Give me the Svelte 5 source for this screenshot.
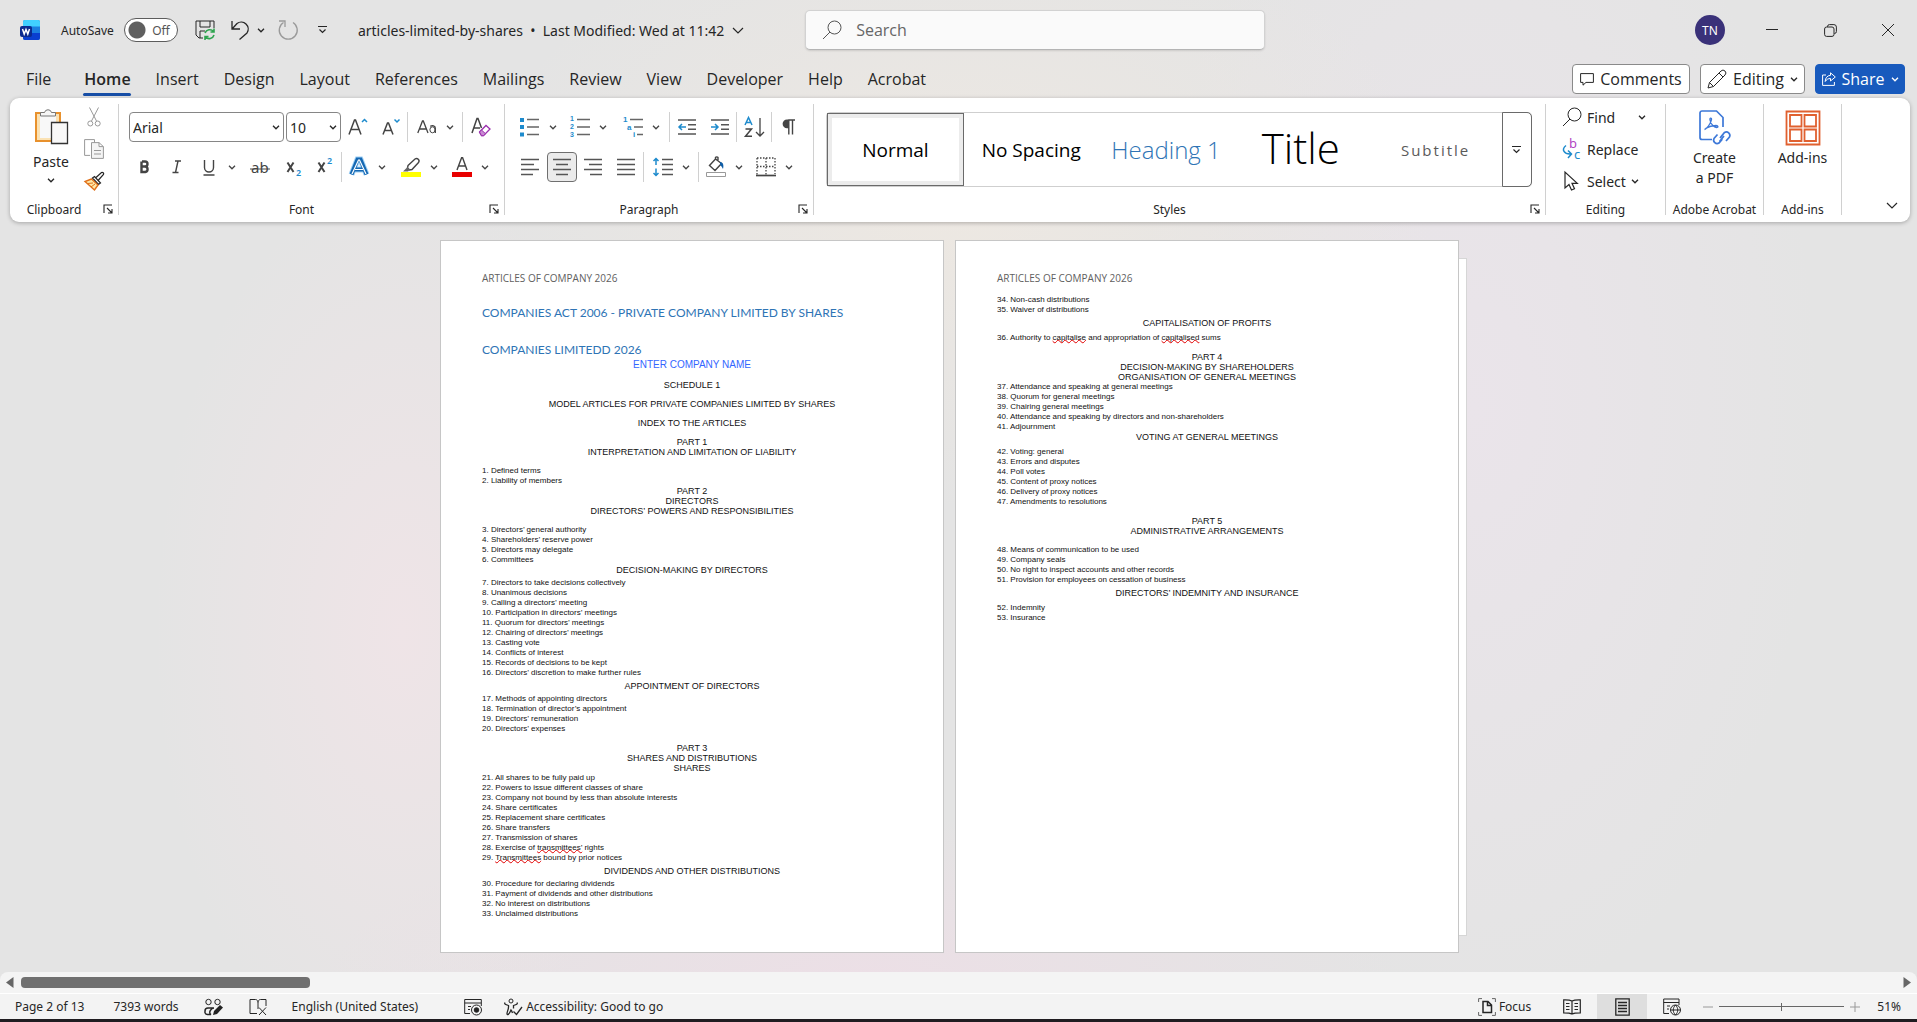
<script lang="ts">
    type Tool = { icon?: string; w?: number; label?: string; menu?: boolean; on?: boolean; sep?: boolean };
    type Line = { t: string; kind?: "item" | "centre" | "name"; gap?: "s" | "m" | "l" };

    // every icon is drawn on its own small canvas: [width, height, markup]
    const icons: Record<string, [number, number, string]> = {
        word: [20, 20, `<rect x="3" y="0" width="17" height="20" rx="2" fill="#1b7fe0" stroke="none"/><path d="M5 0h13a2 2 0 0 1 2 2v4.500H3V2a2 2 0 0 1 2-2z" fill="#41d0ff" stroke="none"/><path d="M3 13h17v5a2 2 0 0 1-2 2H5a2 2 0 0 1-2-2z" fill="#0a3fd0" stroke="none"/><rect x="0" y="6" width="12" height="11" rx="2" fill="#0b2a8e" stroke="none"/><path d="M2.500 9 4.200 14 6 9.500 7.800 14 9.500 9" stroke="#fff" stroke-width="1.500"/>`],
        save: [20, 20, `<path d="M1 1h18v7M1 1v14l3 3h4M5 1v6h10V1M5 18v-7h5"/><path d="M10 13a5 5 0 0 1 8.500-1.500M19 8.500V12h-3.500M19 15a5 5 0 0 1-8.500 2M10 20v-3.500h3.500" stroke="#2ea44f" stroke-width="1.600"/>`],
        undo: [18, 20, `<path d="M1 1v8h8M1.500 8.500 6 3.500a7 7 0 0 1 10 9.500L8.500 19.500" stroke-width="1.300"/>`],
        redo: [20, 20, `<path d="M5.500 2.500a9 9 0 1 0 9.500 0M1 1h6v6" stroke="#9a9a9a" stroke-width="1.300"/>`],
        qat: [9, 8, `<path d="M0 .5h9M1.500 3.500l3 3 3-3" stroke-width="1.200"/>`],
        chev: [8, 5, `<path d="M1 .8l3 3 3-3" stroke-width="1.300"/>`],
        chevBig: [12, 7, `<path d="M1 1l5 5 5-5" stroke-width="1.200"/>`],
        search: [20, 20, `<circle cx="12.500" cy="7.500" r="6.500"/><path d="M8 12 1 19"/>`],
        min: [12, 12, `<path d="M0 5.500h12"/>`],
        restore: [13, 13, `<rect x=".6" y="3" width="9.400" height="9.400" rx="2"/><path d="M3.500 3V2.600A2 2 0 0 1 5.500.6h4.400a2.500 2.500 0 0 1 2.500 2.500v4.400a2 2 0 0 1-2 2"/>`],
        close: [12, 12, `<path d="M0 0l12 12M12 0 0 12"/>`],
        comment: [14, 13, `<path d="M.6.6h12.800v8.800H6L3 12.200V9.400H.6z"/>`],
        pencil: [20, 20, `<path d="M1 19l1.500-5.500L14 2a2.800 2.800 0 0 1 4 4L6.500 17.500zM12 4l4 4M2.500 13.500l4 4"/>`],
        share: [14, 14, `<path d="M4 3H.6v10.400h11.800V10"/><path d="M8.500.8 13.300 5 8.500 9V6.500C6 6.500 4.500 7.500 3.200 9.500 3.400 6 5 3.600 8.500 3.300z"/>`],
        paste: [36, 40, `<path d="M3 7h24v28H3z" fill="#fbe2b4" stroke="#e8912d" stroke-width="2"/><path d="M7 10h16v22H7z" fill="#f8f8f8" stroke="none"/><path d="M7.500 10V6.500h4a3.600 3.600 0 0 1 7 0h4V10z" fill="#f6f6f6" stroke="#777"/><path d="M18.500 16.500h16v21h-16z" fill="#f8f8f8" stroke="#333" stroke-width="1.300"/>`],
        cut: [14, 20, `<path d="M2.500.5l7 13.500M11.500.5l-7 13.500" stroke="#999"/><circle cx="3.300" cy="16.500" r="2.500" stroke="#999"/><circle cx="10.700" cy="16.500" r="2.500" stroke="#999"/>`],
        copy: [20, 20, `<path d="M10.500 4V.6H.6v15.800h5.500" stroke="#999"/><path d="M7.500 3.600h7.500l4.400 4v11.800H7.500zM15 3.600v4h4.400M10 11.500h7M10 15h7" fill="#f4f4f4" stroke="#999"/>`],
        painter: [20, 20, `<path d="M12 6.500l5.500-5a1.500 1.500 0 0 1 2 2L14.500 9M8.500 7l2-1.500 6 6.500-2 1.500z" stroke-width="1.200"/><path d="M7.500 8 1 10.500l9.500 8.500 3.500-5z" fill="#ffe9a8" stroke="#e0701a" stroke-width="1.400"/><path d="M3.500 12.500 9 12M7 16l4-3" stroke="#e0701a"/>`],
        grow: [20, 20, `<path d="M1 17.500 6.500 3h1L13 17.500M3 12.500h8" stroke-width="1.500"/><path d="M14 5l2.500-2.500L19 5" stroke="#1e8bcd" stroke-width="1.500"/>`],
        shrink: [20, 20, `<path d="M2 17.500 6.500 6h1L12 17.500M4 13.500h6" stroke-width="1.500"/><path d="M13.500 2.500 16 5l2.500-2.500" stroke="#1e8bcd" stroke-width="1.500"/>`],
        cases: [20, 20, `<path d="M.8 16 5.500 4h.8L11 16M2.500 12h7" stroke-width="1.300"/><ellipse cx="15.500" cy="12.800" rx="2.600" ry="3"/><path d="M13.300 9.400c2-1.400 5-.8 5 1.600V16" stroke-width="1.300"/>`],
        clear: [20, 20, `<path d="M1 16 6 1.500h1L10.500 11M3 11h6" stroke-width="1.500"/><path d="M8.500 15 15 8.500l4 3.500-6.500 6.700H10.500z" fill="#fff" stroke="#9b2fae" stroke-width="1.300"/><path d="M8.500 15l2-2 4 3.700-2 2H10.500z" fill="#c98ad3" stroke="#9b2fae"/>`],
        bold: [20, 20, `<path d="M6.500 4.500v10.500h3.800a2.800 2.800 0 0 0 0-5.500H7M7 4.500h3a2.400 2.400 0 0 1 0 5" stroke-width="2.400"/>`],
        italic: [20, 20, `<path d="M8 4h6M5.500 15.500h6M11 4 8.500 15.500" stroke-width="1.400"/>`],
        under: [20, 20, `<path d="M5.500 3v7.500a4 4 0 0 0 9 0V3M4.500 18h11" stroke-width="1.400"/>`],
        strike: [20, 20, `<text x="1" y="16" font-size="15" fill="#444" stroke="none">ab</text><path d="M0 12h20"/>`],
        sub: [20, 20, `<path d="M3.500 5.500l6 9.500M9.500 5.500l-6 9.500" stroke-width="2"/><text x="12" y="19" font-size="9" font-weight="600" fill="#1e8bcd" stroke="none">2</text>`],
        sup: [20, 20, `<path d="M3.500 5.500l6 9.500M9.500 5.500l-6 9.500" stroke-width="2"/><text x="12" y="7" font-size="9" font-weight="600" fill="#1e8bcd" stroke="none">2</text>`],
        effects: [20, 20, `<path d="M2.500 17.500 8.500 2.500h3l6 15M5.500 12.500h9" stroke="#9fd0f5" stroke-width="6"/><path d="M2.500 17.500 8.500 2.500h3l6 15M5.500 12.500h9" stroke="#1568b3" stroke-width="4"/><path d="M3 17 9.500 3h1L17 17M6 12.500h8" stroke="#fff" stroke-width="1.200"/>`],
        marker: [20, 20, `<path d="M7 8.500 14 2a2.500 2.500 0 0 1 3.500 3.500l-6.500 7-2.500.5-2-2z" stroke-width="1.400"/><path d="M2 14.500l4.500-4.500 2.500 2.500-2 2z" fill="#666" stroke="none"/><rect y="15" width="20" height="5" fill="#ffff00" stroke="none"/>`],
        colour: [20, 20, `<path d="M5 13 9.600.800h1L15 13M6.500 9h7" stroke-width="1.400"/><rect y="15" width="20" height="5" fill="#e80000" stroke="none"/>`],
        bullets: [20, 20, `<path d="M7 2.500h12M7 10h12M7 17.500h12" stroke="#666" stroke-width="1.500"/><path d="M0 1h4v4H0zM0 8h4v4H0zM0 15.500h4v4H0z" fill="#1e8bcd" stroke="none"/>`],
        numbers: [20, 20, `<path d="M7 2.500h13M7 10h13M7 17.500h13" stroke="#666" stroke-width="1.500"/><g font-family="Liberation Sans" font-size="7" font-weight="700" fill="#1e8bcd" stroke="none"><text x="0" y="4">1</text><text x="0" y="12">2</text><text x="0" y="20">3</text></g>`],
        multi: [20, 20, `<path d="M7 2.500h13M11 10h9M14 17.500h6" stroke="#666" stroke-width="1.500"/><g font-family="Liberation Sans" font-size="8" font-weight="700" fill="#1e8bcd" stroke="none"><text x="0" y="5">1</text><text x="4" y="13">a</text><text x="10" y="20">i</text></g>`],
        outdent: [18, 18, `<path d="M0 2h18M10 6.700h8M10 11.300h8M0 16h18" stroke="#555" stroke-width="1.400"/><path d="M8 9H1M4 6 1 9l3 3" stroke="#1e8bcd" stroke-width="1.500"/>`],
        indent: [18, 18, `<path d="M0 2h18M10 6.700h8M10 11.300h8M0 16h18" stroke="#555" stroke-width="1.400"/><path d="M0 9h7M4 6l3 3-3 3" stroke="#1e8bcd" stroke-width="1.500"/>`],
        sort: [20, 20, `<path d="M1 8 4.500.500 8 8M2.200 5.500h4.600" stroke="#1e8bcd" stroke-width="1.500"/><path d="M1.500 12h6l-6 7.200h6.500" stroke-width="1.500"/><path d="M16 1v18M12 15l4 4 4-4" stroke-width="1.300"/>`],
        pilcrow: [14, 16, `<path d="M6.500 1H13M6.800 1v14.500M10.500 1v14.500" stroke-width="1.400"/><path d="M7 .4H5a4.400 4.400 0 0 0 0 8.800h2z" fill="#444" stroke="none"/>`],
        left: [18, 18, `<path d="M0 1.500h18M0 6.500h13M0 11.500h18M0 16.500h12" stroke="#555" stroke-width="1.500"/>`],
        centre: [18, 18, `<path d="M0 1.500h18M3 6.500h12M0 11.500h18M3 16.500h12" stroke="#555" stroke-width="1.500"/>`],
        right: [18, 18, `<path d="M0 1.500h18M5 6.500h13M0 11.500h18M6 16.500h12" stroke="#555" stroke-width="1.500"/>`],
        justify: [18, 18, `<path d="M0 1.500h18M0 6.500h18M0 11.500h18M0 16.500h18" stroke="#555" stroke-width="1.500"/>`],
        spacing: [20, 20, `<path d="M9 2.500h11M9 7.500h11M9 12.500h11M9 17.500h11" stroke="#555" stroke-width="1.500"/><path d="M3 1.500V8M.5 4 3 1.500 5.500 4M3 11.500v7M.5 16 3 18.500 5.500 16" stroke="#1e8bcd" stroke-width="1.500"/>`],
        bucket: [20, 20, `<path d="M9.500 2 3.500 8.500l5.500 5 6.500-7zM9.500 2v-1.500a1.500 1.500 0 0 1 2.500 0V4" stroke-width="1.400"/><path d="M14 5c3 0 4 3 3 7-1-2-1.500-3-3-4z" fill="#0f5ea8" stroke="none"/><path d="M.5 15.500h19v4H.5z" stroke="#999"/>`],
        borders: [20, 20, `<path d="M1 1h18v16M1 1v17M10 1v17M1 9.500h18" stroke-dasharray="1.500 1.500" stroke-width="1.300"/><path d="M0 18.500h20" stroke-width="1.700"/>`],
        launch: [10, 10, `<path d="M1 9V1h8M4 4l5 5M9 5v4H5" stroke-width="1.100"/>`],
        replace: [20, 20, `<text x="7" y="9" font-size="13" fill="#b146c2" stroke="none">b</text><text x="12" y="20" font-size="13" fill="#1e8bcd" stroke="none">c</text><path d="M4 6.500c-5 4-2 9 5 8.500M6 11.500l3.500 3.500L6 19" stroke="#1e8bcd" stroke-width="1.500"/>`],
        pointer: [20, 20, `<path d="M3 1v16l4-3.500 2.500 5.500 3-1.300-2.500-5.400h5.300z" stroke-width="1.200"/>`],
        pdf: [32, 36, `<path d="M13 29.500H3a2 2 0 0 1-2-2V3a2 2 0 0 1 2-2h14.500L24 7.500V17" stroke="#3d78d8" stroke-width="1.700"/><path d="M5.500 19.500c2-.5 6-5 7-10 .3-2-2-2-1.500.5.700 4 4 7.500 6.500 7.500 2 0 2-1.800-.5-2-3 0-7 1-10.500 3" stroke="#3d78d8" stroke-width="1.300"/><path d="M21 26l4.500-5.500a3.500 3.500 0 0 1 5 4.500L27 29M25 24l-4.500 5.500M23.500 27 20 31a3.500 3.500 0 0 1-5-4.500l3.500-4" stroke="#3d78d8" stroke-width="1.700" transform="translate(0 2)"/>`],
        addins: [36, 36, `<path d="M1.500 1.500h33v33h-33zM5 5h11.500v11.500H5zM19.500 5H31v11.500H19.500zM5 19.500h11.500V31H5zM19.500 19.500H31V31H19.500z" stroke="#e0602f" stroke-width="1.800"/>`],
        tracking: [20, 18, `<circle cx="4.500" cy="4" r="2.700"/><circle cx="13.500" cy="4" r="2.700"/><path d="M1 15v-2a3 3 0 0 1 3-3h6c-3 0-6 5-3 6.500H4A3 3 0 0 1 1 15" stroke-width="1.500"/><path d="M9 17l1-4 6-6 3 2.500-6 6.500z" fill="#222" stroke="none"/>`],
        proof: [18, 18, `<path d="M8 15.500H1v-14h5.500C8 1.500 9 3 9 4.500V11M9 4.500c0-1.500 1-3 2.500-3H17V8M10 9.500l7 7.500M17 9.500 10 17"/>`],
        macro: [18, 18, `<path d="M6 15.500H.7V1.500h16.600V8M.7 5h16.600M4 8.500h3M4 11.500h2"/><circle cx="12.500" cy="12" r="5" fill="#f3f3f3"/><circle cx="12.500" cy="12" r="2.300" fill="#222"/>`],
        access: [18, 18, `<circle cx="7" cy="3" r="2"/><path d="M1 4.500c-1 1.500.5 2 3.500 3C5 11 3 13.500 3 15.500S5 17 7 12c1 1 1 2 1.500 3M13 4.500c1 1.500-.5 2-3.500 3v3M9.500 13.500l3 3L18 9" stroke-width="1.300"/>`],
        focus: [18, 18, `<path d="M.6 4V.6H4M14 .6h3.400V4M17.400 14v3.400H14M4 17.400H.6V14" stroke="#666"/><path d="M5 3.500h5l3.500 3.500v7.500H5zM9.500 3.500V7.500h4" stroke-width="1.500"/>`],
        read: [18, 16, `<path d="M9 2C7 .800 4 .7.7.8v13c3.300 0 6.300 0 8.300 1.200 2-1.200 5-1.200 8.300-1.200V.8C14 .7 11 .8 9 2zv13M3 4.500h3.500M3 7.500h3.500M3 10.500h3.500M11.500 4.500H15M11.500 7.500H15M11.500 10.500H15" stroke-width="1.200"/>`],
        print: [15, 18, `<path d="M.8.8h13.400v16.400H.8zM3 4.500h9M3 7.500h9M3 10.500h9M3 13.500h9" stroke-width="1.300"/>`],
        web: [18, 18, `<path d="M6 15.500H.7V1H16v6M.7 4.500H16M4 8h3M4 11h2"/><circle cx="12.500" cy="12" r="5" fill="#f3f3f3"/><path d="M7.500 12h10M12.500 7c-3 3-3 7 0 10M12.500 7c3 3 3 7 0 10"/>`],
        minus: [10, 10, `<path d="M0 5h10" stroke="#999"/>`],
        plus: [10, 10, `<path d="M0 5h10M5 0v10" stroke="#999"/>`],
        arrowL: [8, 11, `<path d="M7.500 0v11L0 5.500z" fill="#666" stroke="none"/>`],
        arrowR: [8, 11, `<path d="M.5 0v11L8 5.500z" fill="#666" stroke="none"/>`],
    };

    const tabs = ["File", "Home", "Insert", "Design", "Layout", "References", "Mailings", "Review", "View", "Developer", "Help", "Acrobat"];
    let activeTab = "Home";

    const fontTop: Tool[] = [
        { icon: "grow", w: 34, label: "Increase font size" },
        { icon: "shrink", w: 32, label: "Decrease font size" },
        { sep: true },
        { icon: "cases", w: 54, label: "Change case", menu: true },
        { sep: true },
        { icon: "clear", w: 36, label: "Clear all formatting" },
    ];
    const fontBottom: Tool[] = [
        { icon: "bold", w: 32, label: "Bold" },
        { icon: "italic", w: 32, label: "Italic" },
        { icon: "under", w: 48, label: "Underline", menu: true },
        { icon: "strike", w: 38, label: "Strikethrough" },
        { icon: "sub", w: 30, label: "Subscript" },
        { icon: "sup", w: 32, label: "Superscript" },
        { sep: true },
        { icon: "effects", w: 50, label: "Text effects", menu: true },
        { icon: "marker", w: 54, label: "Highlight colour", menu: true },
        { icon: "colour", w: 48, label: "Font colour", menu: true },
    ];
    const paraTop: Tool[] = [
        { icon: "bullets", w: 50, label: "Bullets", menu: true },
        { icon: "numbers", w: 50, label: "Numbering", menu: true },
        { icon: "multi", w: 56, label: "Multilevel list", menu: true },
        { sep: true },
        { icon: "outdent", w: 34, label: "Decrease indent" },
        { icon: "indent", w: 32, label: "Increase indent" },
        { sep: true },
        { icon: "sort", w: 34, label: "Sort" },
        { sep: true },
        { icon: "pilcrow", w: 34, label: "Show marks" },
    ];
    const paraBottom: Tool[] = [
        { icon: "left", w: 34, label: "Align left" },
        { icon: "centre", w: 30, label: "Centre", on: true },
        { icon: "right", w: 32, label: "Align right" },
        { icon: "justify", w: 34, label: "Justify" },
        { sep: true },
        { icon: "spacing", w: 54, label: "Line spacing", menu: true },
        { sep: true },
        { icon: "bucket", w: 50, label: "Shading", menu: true },
        { icon: "borders", w: 50, label: "Borders", menu: true },
    ];

    const styles = [
        { name: "Normal", cls: "normal" },
        { name: "No Spacing", cls: "plain" },
        { name: "Heading 1", cls: "heading" },
        { name: "Title", cls: "title" },
        { name: "Subtitle", cls: "subtitle" },
    ];

    const head = (t: string, gap?: Line["gap"]): Line => ({ t, gap, kind: "centre" });
    const item = (t: string, gap?: Line["gap"]): Line => ({ t, gap, kind: "item" });

    // words between underscores are flagged by the spell checker
    const pageOne: Line[] = [
        { t: "ENTER COMPANY NAME", kind: "name" },
        head("SCHEDULE 1", "l"),
        head("MODEL ARTICLES FOR PRIVATE COMPANIES LIMITED BY SHARES", "l"),
        head("INDEX TO THE ARTICLES", "l"),
        head("PART 1", "l"),
        head("INTERPRETATION AND LIMITATION OF LIABILITY"),
        item("1. Defined terms", "l"),
        item("2. Liability of members"),
        head("PART 2"),
        head("DIRECTORS"),
        head("DIRECTORS’ POWERS AND RESPONSIBILITIES"),
        item("3. Directors’ general authority", "l"),
        item("4. Shareholders’ reserve power"),
        item("5. Directors may delegate"),
        item("6. Committees"),
        head("DECISION-MAKING BY DIRECTORS"),
        item("7. Directors to take decisions collectively", "s"),
        item("8. Unanimous decisions"),
        item("9. Calling a directors’ meeting"),
        item("10. Participation in directors’ meetings"),
        item("11. Quorum for directors’ meetings"),
        item("12. Chairing of directors’ meetings"),
        item("13. Casting vote"),
        item("14. Conflicts of interest"),
        item("15. Records of decisions to be kept"),
        item("16. Directors’ discretion to make further rules"),
        head("APPOINTMENT OF DIRECTORS", "s"),
        item("17. Methods of appointing directors", "s"),
        item("18. Termination of director’s appointment"),
        item("19. Directors’ remuneration"),
        item("20. Directors’ expenses"),
        head("PART 3", "l"),
        head("SHARES AND DISTRIBUTIONS"),
        head("SHARES"),
        item("21. All shares to be fully paid up"),
        item("22. Powers to issue different classes of share"),
        item("23. Company not bound by less than absolute interests"),
        item("24. Share certificates"),
        item("25. Replacement share certificates"),
        item("26. Share transfers"),
        item("27. Transmission of shares"),
        item("28. Exercise of _transmittees’_ rights"),
        item("29. _Transmittees_ bound by prior notices"),
        head("DIVIDENDS AND OTHER DISTRIBUTIONS", "s"),
        item("30. Procedure for declaring dividends", "s"),
        item("31. Payment of dividends and other distributions"),
        item("32. No interest on distributions"),
        item("33. Unclaimed distributions"),
    ];
    const pageTwo: Line[] = [
        item("34. Non-cash distributions"),
        item("35. Waiver of distributions"),
        head("CAPITALISATION OF PROFITS", "s"),
        item("36. Authority to _capitalise_ and appropriation of _capitalised_ sums", "m"),
        head("PART 4", "l"),
        head("DECISION-MAKING BY SHAREHOLDERS"),
        head("ORGANISATION OF GENERAL MEETINGS"),
        item("37. Attendance and speaking at general meetings"),
        item("38. Quorum for general meetings"),
        item("39. Chairing general meetings"),
        item("40. Attendance and speaking by directors and non-shareholders"),
        item("41. Adjournment"),
        head("VOTING AT GENERAL MEETINGS"),
        item("42. Voting: general", "m"),
        item("43. Errors and disputes"),
        item("44. Poll votes"),
        item("45. Content of proxy notices"),
        item("46. Delivery of proxy notices"),
        item("47. Amendments to resolutions"),
        head("PART 5", "l"),
        head("ADMINISTRATIVE ARRANGEMENTS"),
        item("48. Means of communication to be used", "l"),
        item("49. Company seals"),
        item("50. No right to inspect accounts and other records"),
        item("51. Provision for employees on cessation of business"),
        head("DIRECTORS’ INDEMNITY AND INSURANCE", "s"),
        item("52. Indemnity", "m"),
        item("53. Insurance"),
    ];
</script>

{#snippet ico(name: string)}
    <svg class="ico" width={icons[name][0]} height={icons[name][1]} viewBox="0 0 {icons[name][0]} {icons[name][1]}" aria-hidden="true">{@html icons[name][2]}</svg>
{/snippet}

{#snippet tools(list: Tool[])}
    {#each list as tool}
        {#if tool.sep}
            <span class="tool-sep"></span>
        {:else}
            <button class="tool" class:on={tool.on} style="width: {tool.w}px" aria-label={tool.label}>
                {@render ico(tool.icon ?? "")}
                {#if tool.menu}{@render ico("chev")}{/if}
            </button>
        {/if}
    {/each}
{/snippet}

{#snippet caption(text: string, launcher: boolean)}
    <div class="caption">
        <span>{text}</span>
        {#if launcher}<button class="launcher" aria-label="{text} settings">{@render ico("launch")}</button>{/if}
    </div>
{/snippet}

{#snippet lines(list: Line[])}
    {#each list as line}
        <p class="line {line.kind} {line.gap ? 'gap-' + line.gap : ''}">
            {#each line.t.split("_") as part, i}{#if i % 2}<span class="typo">{part}</span>{:else}{part}{/if}{/each}
        </p>
    {/each}
{/snippet}

<div class="app">
    <header class="titlebar">
        <div class="quick">
            <span class="logo">{@render ico("word")}</span>
            <label class="autosave">
                AutoSave
                <span class="switch"><input type="checkbox" /><span class="off">Off</span></span>
            </label>
            <button class="save" aria-label="Save">{@render ico("save")}</button>
            <button class="undo" aria-label="Undo">{@render ico("undo")}{@render ico("chev")}</button>
            <button class="redo" aria-label="Redo">{@render ico("redo")}</button>
            <button class="more" aria-label="Customise toolbar">{@render ico("qat")}</button>
            <button class="docname">articles-limited-by-shares&nbsp; • &nbsp;Last Modified: Wed at 11:42 {@render ico("chevBig")}</button>
        </div>
        <label class="search">
            {@render ico("search")}
            <input type="search" placeholder="Search" aria-label="Search" />
        </label>
        <div class="window">
            <button class="avatar">TN</button>
            <button aria-label="Minimise">{@render ico("min")}</button>
            <button aria-label="Restore">{@render ico("restore")}</button>
            <button aria-label="Close">{@render ico("close")}</button>
        </div>
    </header>

    <nav class="tabs">
        {#each tabs as tab}
            <button class="tab" class:active={tab === activeTab} on:click={() => (activeTab = tab)}>{tab}</button>
        {/each}
        <div class="actions">
            <button class="action comments">{@render ico("comment")} Comments</button>
            <button class="action editing">{@render ico("pencil")} Editing {@render ico("chev")}</button>
            <button class="action share">{@render ico("share")} Share {@render ico("chev")}</button>
        </div>
    </nav>

    <section class="ribbon">
        <div class="group clipboard">
            <div class="body">
                <button class="big paste">{@render ico("paste")}<span>Paste</span>{@render ico("chev")}</button>
                <div class="stack">
                    <button aria-label="Cut">{@render ico("cut")}</button>
                    <button aria-label="Copy">{@render ico("copy")}</button>
                    <button aria-label="Format painter">{@render ico("painter")}</button>
                </div>
            </div>
            {@render caption("Clipboard", true)}
        </div>

        <div class="group font">
            <div class="rows">
                <div class="row">
                    <div class="combo face">
                        <select aria-label="Font"><option>Arial</option></select>
                        {@render ico("chev")}
                    </div>
                    <div class="combo size">
                        <select aria-label="Font size"><option>10</option></select>
                        {@render ico("chev")}
                    </div>
                    {@render tools(fontTop)}
                </div>
                <div class="row">{@render tools(fontBottom)}</div>
            </div>
            {@render caption("Font", true)}
        </div>

        <div class="group paragraph">
            <div class="rows">
                <div class="row">{@render tools(paraTop)}</div>
                <div class="row">{@render tools(paraBottom)}</div>
            </div>
            {@render caption("Paragraph", true)}
        </div>

        <div class="group styles">
            <div class="gallery">
                {#each styles as style}
                    <button class="style {style.cls}">{style.name}</button>
                {/each}
                <button class="expand" aria-label="More styles">{@render ico("qat")}</button>
            </div>
            {@render caption("Styles", true)}
        </div>

        <div class="group edit">
            <div class="stack">
                <button>{@render ico("search")}<span class="find">Find</span>{@render ico("chev")}</button>
                <button>{@render ico("replace")}<span>Replace</span></button>
                <button>{@render ico("pointer")}<span>Select</span>{@render ico("chev")}</button>
            </div>
            {@render caption("Editing", false)}
        </div>

        <div class="group acrobat">
            <button class="big">{@render ico("pdf")}<span>Create<br />a PDF</span></button>
            {@render caption("Adobe Acrobat", false)}
        </div>

        <div class="group addins">
            <button class="big">{@render ico("addins")}<span>Add-ins</span></button>
            {@render caption("Add-ins", false)}
        </div>

        <button class="collapse" aria-label="Collapse ribbon">{@render ico("chevBig")}</button>
    </section>

    <main class="canvas">
        <article class="page">
            <p class="running">ARTICLES OF COMPANY 2026</p>
            <h1>COMPANIES ACT 2006 - PRIVATE COMPANY LIMITED BY SHARES</h1>
            <h1>COMPANIES LIMITEDD 2026</h1>
            {@render lines(pageOne)}
        </article>
        <article class="page second">
            <p class="running">ARTICLES OF COMPANY 2026</p>
            {@render lines(pageTwo)}
        </article>
        <div class="behind"></div>
    </main>

    <div class="scrollbar">
        <button aria-label="Scroll left">{@render ico("arrowL")}</button>
        <div class="track"><div class="thumb"></div></div>
        <button aria-label="Scroll right">{@render ico("arrowR")}</button>
    </div>

    <footer class="status">
        <button class="pages">Page 2 of 13</button>
        <button class="words">7393 words</button>
        <button class="track-btn" aria-label="Track changes">{@render ico("tracking")}</button>
        <button class="proof" aria-label="Proofing errors">{@render ico("proof")}</button>
        <button class="lang">English (United States)</button>
        <button class="macro" aria-label="Record macro">{@render ico("macro")}</button>
        <button class="access">{@render ico("access")} Accessibility: Good to go</button>
        <div class="views">
            <button class="focus">{@render ico("focus")} Focus</button>
            <button class="view" aria-label="Read mode">{@render ico("read")}</button>
            <button class="view current" aria-label="Print layout">{@render ico("print")}</button>
            <button class="view" aria-label="Web layout">{@render ico("web")}</button>
            <button class="zoom-step" aria-label="Zoom out">{@render ico("minus")}</button>
            <input type="range" min="0" max="100" value="50" aria-label="Zoom" />
            <button class="zoom-step" aria-label="Zoom in">{@render ico("plus")}</button>
            <button class="percent">51%</button>
        </div>
    </footer>
</div>

<style>
    :global(body) {
        background: #e4e4e4;
    }

    .app {
        display: flex;
        flex-direction: column;
        min-height: 100vh;
        box-sizing: border-box;
        border-bottom: 3px solid #1f1c20;
        font-family: "Noto Sans", "Open Sans", sans-serif;
        font-size: 12px;
        color: #262626;
        background:
            radial-gradient(ellipse 13% 45% at 21% 62%, #efe4e7 0%, transparent 100%),
            radial-gradient(ellipse 25% 30% at 50% 20%, #ede8e2 0%, transparent 100%),
            radial-gradient(ellipse 28% 16% at 45% 96%, #ecdfe6 0%, transparent 100%),
            radial-gradient(ellipse 18% 60% at 77% 40%, #eae4ea 0%, transparent 100%),
            #e4e4e4;
    }

    button {
        display: flex;
        align-items: center;
        justify-content: center;
        margin: 0;
        padding: 0;
        border: none;
        background: none;
        color: inherit;
        font: inherit;
        white-space: nowrap;
    }

    p,
    h1 {
        margin: 0;
    }

    .ico {
        display: block;
        flex: none;
        fill: none;
        stroke: currentColor;
        overflow: visible;
    }

    /* title bar */
    .titlebar {
        display: grid;
        grid-template-columns: 42% 24% 1fr;
        align-items: center;
        height: 60px;
    }

    .quick {
        display: flex;
        align-items: center;
        padding-left: 20px;
    }

    .autosave {
        display: flex;
        align-items: center;
        gap: 10px;
        margin-left: 21px;
    }

    .switch {
        display: grid;
        align-items: center;
    }

    .switch > * {
        grid-area: 1 / 1;
    }

    .switch input {
        appearance: none;
        width: 54px;
        height: 24px;
        margin: 0;
        border: 1px solid #5c5c5c;
        border-radius: 12px;
        background: radial-gradient(circle at 12px 11px, #5f5f5f 8px, #fff 9px);
    }

    .off {
        justify-self: end;
        padding-right: 8px;
        color: #555;
    }

    .save {
        margin-left: 17px;
    }

    .undo {
        gap: 8px;
        margin-left: 16px;
    }

    .redo {
        margin-left: 13px;
    }

    .more {
        margin-left: 20px;
    }

    .docname {
        gap: 8px;
        margin-left: 31px;
        font-size: 14px;
    }

    .search {
        display: flex;
        align-items: center;
        gap: 14px;
        height: 40px;
        box-sizing: border-box;
        padding: 0 16px;
        border: 1px solid #d2d2d2;
        border-bottom-color: #b4b4b4;
        border-radius: 5px;
        background: #fafafa;
        box-shadow: 0 1px 2px rgba(0, 0, 0, 0.12);
        color: #555;
    }

    .search input {
        flex: 1;
        min-width: 0;
        padding: 0;
        border: none;
        outline: none;
        background: none;
        font-family: "Open Sans", sans-serif;
        font-size: 16px;
        color: inherit;
    }

    .search input::placeholder {
        color: #666;
        opacity: 1;
    }

    .window {
        display: flex;
        align-items: center;
        justify-content: flex-end;
    }

    .window button {
        width: 58px;
        height: 30px;
    }

    .window .avatar {
        width: 30px;
        margin-right: 18px;
        border-radius: 50%;
        background: #3a3179;
        color: #fff;
    }

    /* ribbon tabs */
    .tabs {
        display: flex;
        align-items: center;
        height: 38px;
        padding: 0 12px 0 13px;
        font-family: "Open Sans", sans-serif;
    }

    .tab {
        position: relative;
        padding: 0 12px 0 13px;
        height: 34px;
        font-size: 16px;
    }

    .tab:first-child {
        margin-right: 8px;
    }

    .tab.active {
        font-weight: 600;
    }

    .tab.active::after {
        content: "";
        position: absolute;
        left: 12px;
        right: 12px;
        bottom: 0;
        height: 3px;
        border-radius: 2px;
        background: #174ea6;
    }

    .actions {
        display: flex;
        gap: 10px;
        margin-left: auto;
    }

    .action {
        gap: 6px;
        height: 30px;
        box-sizing: border-box;
        border: 1px solid #8a8a8a;
        border-radius: 4px;
        background: #fff;
        font-size: 16px;
    }

    .comments {
        width: 118px;
    }

    .editing {
        width: 105px;
    }

    .share {
        width: 90px;
        border-color: #185abd;
        background: #185abd;
        color: #fff;
    }

    /* ribbon */
    .ribbon {
        display: flex;
        height: 124px;
        margin: 0 7px 0 10px;
        border-radius: 9px;
        background: #fff;
        box-shadow: 0 1px 4px rgba(0, 0, 0, 0.28);
    }

    .group {
        display: flex;
        flex-direction: column;
        justify-content: space-between;
        box-sizing: border-box;
        margin: 6px 0 7px;
        border-right: 1px solid #d0d0d0;
    }

    .clipboard {
        width: 109px;
    }

    .font {
        width: 386px;
    }

    .paragraph {
        width: 309px;
    }

    .styles {
        flex: 1;
        min-width: 0;
    }

    .edit {
        width: 120px;
    }

    .acrobat {
        width: 98px;
    }

    .addins {
        width: 78px;
    }

    .caption {
        display: flex;
        align-items: center;
        height: 12px;
        text-align: center;
        white-space: nowrap;
    }

    .caption span {
        flex: 1;
    }

    .launcher {
        width: 20px;
    }

    .body {
        display: flex;
        gap: 14px;
        padding-left: 22px;
    }

    .big {
        flex-direction: column;
        justify-content: flex-start;
        gap: 2px;
        padding-top: 6px;
        font-size: 14px;
        line-height: 20px;
        white-space: normal;
    }

    .big.paste {
        gap: 6px;
        width: 38px;
        padding-top: 2px;
    }

    .stack {
        display: flex;
        flex-direction: column;
        margin-top: -3px;
    }

    .stack button {
        height: 32px;
        font-size: 14px;
    }

    .clipboard .stack button {
        width: 20px;
    }

    .edit .stack {
        padding-left: 16px;
    }

    .edit .stack button {
        justify-content: flex-start;
        gap: 5px;
    }

    .edit .find {
        flex: none;
        width: 46px;
        text-align: left;
    }

    .rows {
        display: flex;
        flex-direction: column;
        gap: 10px;
        padding: 8px 0 0 10px;
    }

    .paragraph .rows {
        padding-left: 8px;
    }

    .row {
        display: flex;
        align-items: center;
        height: 30px;
    }

    .tool {
        gap: 9px;
        height: 30px;
        box-sizing: border-box;
        color: #444;
    }

    .tool.on {
        border: 1px solid #6f6f6f;
        border-radius: 4px;
        background: #ebebeb;
    }

    .tool-sep {
        width: 1px;
        height: 30px;
        background: #d0d0d0;
    }

    .combo {
        display: grid;
        align-items: center;
        margin-right: 2px;
    }

    .combo > :global(*) {
        grid-area: 1 / 1;
    }

    .combo > :global(svg) {
        justify-self: end;
        margin-right: 4px;
        pointer-events: none;
    }

    .combo select {
        appearance: none;
        width: 100%;
        height: 30px;
        padding: 0 3px;
        border: 1px solid #868686;
        border-radius: 4px;
        background: #fff;
        color: #262626;
        font: inherit;
        font-size: 14px;
    }

    .face {
        width: 155px;
    }

    .size {
        width: 55px;
        margin-right: 0;
    }

    .gallery {
        display: flex;
        height: 75px;
        box-sizing: border-box;
        margin: 8px 13px 0 12px;
        border: 1px solid #cfcfcf;
        border-radius: 4px;
    }

    .style {
        flex: 1;
        min-width: 0;
        font-family: "Open Sans", sans-serif;
        font-size: 19px;
        color: #000;
    }

    .style.normal {
        border: 1px solid #6a6a6a;
        outline: 4px solid #ececec;
        outline-offset: -5px;
    }

    .style.heading {
        font-size: 24px;
        font-weight: 300;
        color: #2e74b5;
    }

    .style.title {
        padding-bottom: 4px;
        font-size: 42px;
        font-weight: 300;
    }

    .style.subtitle {
        font-size: 15px;
        letter-spacing: 2px;
        color: #5a5a5a;
    }

    .expand {
        width: 30px;
        margin: -1px;
        border: 1px solid #6a6a6a;
        border-radius: 0 5px 5px 0;
    }

    .collapse {
        align-items: flex-end;
        justify-content: flex-end;
        width: 68px;
        padding: 0 12px 13px 0;
    }

    /* document */
    .canvas {
        flex: 1;
        display: flex;
        justify-content: center;
        align-items: flex-start;
        padding: 18px 10px 19px 0;
    }

    .page {
        width: 504px;
        min-height: 713px;
        box-sizing: border-box;
        padding: 31px 41px;
        border: 1px solid #c6c6c6;
        background: #fff;
    }

    .page.second {
        margin-left: 11px;
    }

    .behind {
        width: 8px;
        height: 678px;
        box-sizing: border-box;
        margin-top: 18px;
        border: 1px solid #d6d6d6;
        border-left: none;
        background: #fff;
    }

    .running {
        font-family: "Open Sans", sans-serif;
        font-size: 10px;
        font-weight: 500;
        line-height: 12px;
        color: #606060;
    }

    .second .running {
        margin-bottom: 11px;
    }

    h1 {
        margin-top: 21px;
        font-family: Lato, "Open Sans", sans-serif;
        font-size: 12px;
        font-weight: 400;
        line-height: 16px;
        color: #2e74b5;
    }

    h1 + :global(.name) {
        margin-top: 1px;
    }

    .line {
        font-family: "Liberation Sans", Arial, sans-serif;
        font-size: 8px;
        line-height: 10px;
        color: #111;
    }

    .line.centre {
        text-align: center;
        font-size: 9px;
    }

    .line.name {
        text-align: center;
        font-size: 10px;
        line-height: 12px;
        color: #3366ff;
    }

    .gap-s {
        margin-top: 3px;
    }

    .gap-m {
        margin-top: 5px;
    }

    .gap-l {
        margin-top: 9px;
    }

    .typo {
        text-decoration: underline wavy #e00000 1px;
        text-underline-offset: -1px;
        text-decoration-skip-ink: none;
    }

    /* horizontal scrollbar */
    .scrollbar {
        display: flex;
        align-items: center;
        gap: 7px;
        height: 21px;
        padding: 0 6px;
        border-bottom: 1px solid #fff;
        border-radius: 8px 8px 0 0;
        background: #f4f4f4;
    }

    .track {
        flex: 1;
    }

    .thumb {
        width: 15.4%;
        height: 11px;
        border-radius: 4px;
        background: #707070;
    }

    /* status bar */
    .status {
        display: flex;
        align-items: center;
        height: 25px;
        padding-left: 15px;
        background: #f3f3f3;
    }

    .words {
        margin-left: 29px;
    }

    .track-btn,
    .proof,
    .lang {
        margin-left: 25px;
    }

    .macro {
        margin-left: 46px;
    }

    .access {
        gap: 4px;
        margin-left: 22px;
    }

    .views {
        display: flex;
        align-items: center;
        margin-left: auto;
        padding-right: 16px;
    }

    .focus {
        gap: 3px;
        margin-right: 16px;
    }

    .view {
        width: 50px;
        height: 25px;
    }

    .view.current {
        background: #dedede;
    }

    .zoom-step {
        width: 22px;
        height: 20px;
    }

    input[type="range"] {
        appearance: none;
        width: 125px;
        height: 9px;
        margin: 0;
        background: linear-gradient(#666, #666) center / 100% 1px no-repeat;
    }

    input[type="range"]::-webkit-slider-thumb {
        appearance: none;
        width: 1px;
        height: 8px;
        background: #666;
    }

    .percent {
        margin-left: 11px;
    }
</style>
